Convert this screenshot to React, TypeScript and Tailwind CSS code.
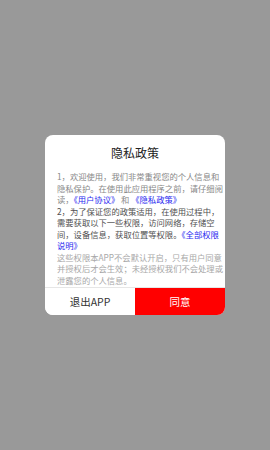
export default function App() {
  const font = { fontFamily: '"Noto Sans CJK SC", "Noto Sans", sans-serif' };
  return (
    <div
      className="w-[270px] h-[450px] bg-[#999999] flex items-center justify-center"
      style={font}
    >
      <div className="w-[180px] h-[180px] bg-white rounded-[8px] overflow-hidden flex flex-col">
        <div className="pt-[10px] h-[36px] shrink-0 text-center text-[12px] leading-[16px] text-[#222]">
          隐私政策
        </div>
        <div className="flex-1 overflow-hidden pl-[12px]">
          <div className="w-[167px] text-[8.3px] leading-[11.5px]">
            <p className="text-[#888888]">
              1，欢迎使用，我们非常重视您的个人信息和隐私保护。在使用此应用程序之前，请仔细阅读，
              <span className="text-[#2a2af0]">《用户协议》</span>
              {" 和 "}
              <span className="text-[#2a2af0]">《隐私政策》</span>
            </p>
            <p className="text-[#505050]">
              2，为了保证您的政策适用，在使用过程中，需要获取以下一些权限，访问网络，存储空间，设备信息，获取位置等权限。
              <span className="text-[#2a2af0]">《全部权限说明》</span>
            </p>
            <p className="text-[#a8a8a8]">
              这些权限本APP不会默认开启，只有用户同意并授权后才会生效；未经授权我们不会处理或泄露您的个人信息。
            </p>
          </div>
        </div>
        <div className="h-[28px] shrink-0 flex border-t border-[#e6e6e6]">
          <button className="flex-1 bg-white text-[#333] text-[10.5px] flex items-center justify-center">
            退出APP
          </button>
          <button className="flex-1 bg-[#ff0000] text-white text-[10.5px] flex items-center justify-center">
            同意
          </button>
        </div>
      </div>
    </div>
  );
}
